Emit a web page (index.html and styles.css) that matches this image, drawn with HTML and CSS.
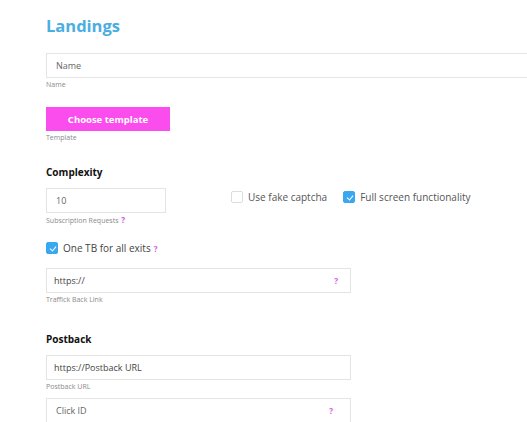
FILE: index.html
```html
<!DOCTYPE html>
<html lang="en">
<head>
    <meta charset="UTF-8">
    <meta name="viewport" content="width=device-width, initial-scale=1.0">
    <title>Landings</title>
    <link rel="stylesheet" href="styles.css">
</head>
<body>
    <div class="page">
        <h1 class="title">Landings</h1>

        <div class="field">
            <div class="input input-wide">Name</div>
            <div class="label">Name</div>
        </div>

        <div class="field field-button">
            <button class="btn">Choose template</button>
            <div class="label">Template</div>
        </div>

        <h2 class="section">Complexity</h2>

        <div class="row">
            <div class="field">
                <div class="input input-small">10</div>
                <div class="label">Subscription Requests <span class="hint">?</span></div>
            </div>
            <div class="checks">
                <label class="check"><span class="box"></span>Use fake captcha</label>
                <label class="check"><span class="box checked"></span>Full screen functionality</label>
            </div>
        </div>

        <label class="check check-tb"><span class="box checked"></span>One TB for all exits <span class="hint">?</span></label>

        <div class="field">
            <div class="input input-mid dark">https://<span class="hint">?</span></div>
            <div class="label">Traffick Back Link</div>
        </div>

        <h2 class="section section-postback">Postback</h2>

        <div class="field">
            <div class="input input-mid dark">https://Postback URL</div>
            <div class="label">Postback URL</div>
        </div>

        <div class="field field-click">
            <div class="input input-mid">Click ID<span class="hint hint-click">?</span></div>
        </div>
    </div>
</body>
</html>
```

FILE: styles.css
```css
html, body {
    margin: 0;
    background: #fff;
    overflow: hidden;
}

body {
    font-family: "Open Sans", "DejaVu Sans", sans-serif;
    color: #333;
}

.page {
    padding: 15px 0 0 46px;
}

.title {
    margin: 0 0 16px 0;
    font-size: 16.5px;
    line-height: 22px;
    font-weight: 700;
    color: #4aaee3;
}

.field {
    display: flex;
    flex-direction: column;
    align-items: flex-start;
}

.input {
    box-sizing: border-box;
    height: 25px;
    border: 1px solid #e4e4e4;
    display: flex;
    align-items: center;
    padding: 0 9px;
    font-size: 9px;
    color: #666;
}

.input.dark {
    color: #444;
    padding-left: 7px;
}

.input-wide {
    width: 520px;
}

.input-small {
    width: 120px;
}

.input-mid {
    width: 305px;
    justify-content: space-between;
}

.label {
    font-size: 7px;
    color: #8a8a8a;
    margin: 3px 0 0 0;
    line-height: 8px;
}

.hint {
    color: #d75ce0;
    font-weight: 700;
}

.label .hint {
    color: #cf4fe0;
    font-size: 8px;
    margin-left: 1px;
}

.input .hint {
    font-size: 8px;
    margin-right: 3px;
}

.input .hint-click {
    margin-right: 8px;
}

.field-button {
    margin-top: 18px;
}

.field-click {
    margin-top: 7px;
}

.btn {
    width: 124px;
    height: 24px;
    border: none;
    background: #fb4ded;
    color: #fff;
    font-family: inherit;
    font-weight: 700;
    font-size: 9.5px;
    padding: 0;
}

.section {
    margin: 23px 0 9px 0;
    font-size: 10px;
    line-height: 14px;
    font-weight: 700;
    color: #111;
}

.section-postback {
    margin: 28px 0 9px 0;
}

.row {
    display: flex;
    align-items: flex-start;
}

.checks {
    display: flex;
    gap: 16px;
    margin: 3px 0 0 65px;
}

.check {
    display: flex;
    align-items: center;
    font-size: 10px;
    color: #555;
    height: 12px;
}

.box {
    box-sizing: border-box;
    width: 12px;
    height: 12px;
    border: 1px solid #ddd;
    border-radius: 2px;
    margin-right: 5px;
    position: relative;
}

.box.checked {
    background: #3aa8ef;
    border-color: #3aa8ef;
}

.box.checked::after {
    content: "";
    position: absolute;
    left: 3.5px;
    top: 1.5px;
    width: 3px;
    height: 5px;
    border: solid #fff;
    border-width: 0 1.5px 1.5px 0;
    transform: rotate(40deg);
}

.check-tb {
    margin: 17px 0 14px 0;
    color: #444;
}

.check-tb .hint {
    font-size: 8px;
    margin-left: 3px;
}
```
